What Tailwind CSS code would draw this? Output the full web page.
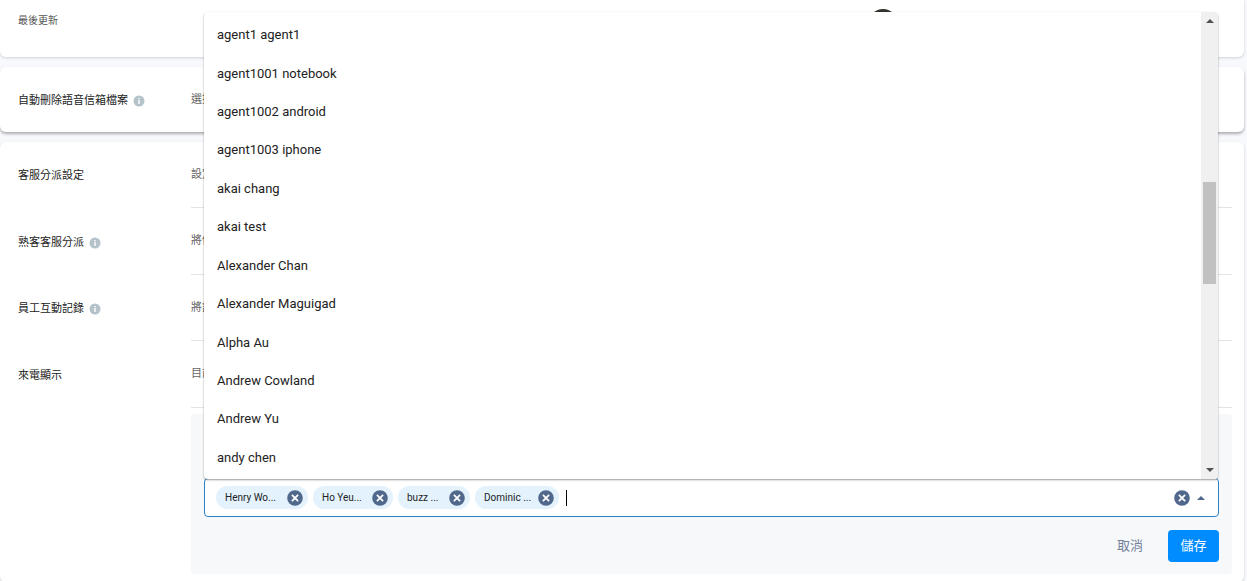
<!DOCTYPE html>
<html lang="zh-Hant">
<head>
    <meta charset="UTF-8">
    <meta name="viewport" content="width=device-width, initial-scale=1.0">
    <title>客服設定</title>
    <script src="https://cdn.jsdelivr.net/npm/@tailwindcss/browser@4"></script>
    <style>
        body {
            font-family: Roboto, 'Noto Sans CJK TC', sans-serif;
        }
    </style>
</head>
<body class="bg-[#f8f9fd] text-[11px] leading-4 text-[#222] overflow-hidden">
    <svg class="hidden">
        <symbol id="info" viewBox="0 0 12 12">
            <circle cx="6" cy="6" r="5.5" fill="#b4c3c9"/>
            <path d="M5.3 2.9h1.4v1.3H5.3zM5.3 5.1h1.4v4H5.3z" fill="#fff"/>
        </symbol>
        <symbol id="close" viewBox="0 0 16 16">
            <circle cx="8" cy="8" r="7.8" fill="#50688b"/>
            <path d="M4.9 4.9l6.2 6.2M11.1 4.9l-6.2 6.2" stroke="#fff" stroke-width="1.8"/>
        </symbol>
    </svg>

    <main class="flex flex-col gap-[10px] pr-[3px]">
        <!-- Last updated -->
        <section class="flex items-start h-[57px] pl-[18px] pt-[9px] bg-white rounded-b-md shadow-[0_1px_3px_rgba(0,0,0,0.16)]">
            <h2 class="w-[173px] pt-1 text-[10px] text-[#555]">最後更新</h2>
            <div class="size-7 ml-[678px] rounded-full bg-[#33332b]"></div>
        </section>

        <!-- Voicemail clean-up -->
        <section class="flex items-center h-[65px] pl-[18px] bg-white rounded-md shadow-[0_2px_3px_rgba(0,0,0,0.3)]">
            <h2 class="flex items-center gap-[5px] w-[173px] pt-[2px]">自動刪除語音信箱檔案 <svg class="size-3"><use href="#info"/></svg></h2>
            <p class="text-[#666]">選擇</p>
        </section>

        <!-- Agent settings -->
        <section class="pl-[18px] pr-3 pb-2 bg-white rounded-md shadow-[0_1px_3px_rgba(0,0,0,0.16)]">
            <div class="flex items-center h-[66px]">
                <h2 class="w-[173px] pt-[2px]">客服分派設定</h2>
                <p class="flex flex-1 items-center h-full border-b border-[#e4e4e4] text-[#666]">設定</p>
            </div>
            <div class="flex items-center h-[67px]">
                <h2 class="flex items-center gap-[5px] w-[173px] pt-[2px]">熟客客服分派 <svg class="size-3"><use href="#info"/></svg></h2>
                <p class="flex flex-1 items-center h-full border-b border-[#e4e4e4] text-[#666]">將你</p>
            </div>
            <div class="flex items-center h-[66px]">
                <h2 class="flex items-center gap-[5px] w-[173px] pt-[2px]">員工互動記錄 <svg class="size-3"><use href="#info"/></svg></h2>
                <p class="flex flex-1 items-center h-full border-b border-[#e4e4e4] text-[#666]">將記</p>
            </div>
            <div class="flex items-center h-[67px]">
                <h2 class="w-[173px] pt-[2px]">來電顯示</h2>
                <p class="flex flex-1 items-center h-full border-b border-[#e4e4e4] text-[#666]">目前</p>
            </div>

            <form class="ml-[173px] mt-[6px] px-[13px] pt-[64px] pb-3 bg-[#f6f8fa] rounded">
                <div class="relative flex items-center gap-[5px] h-[39px] px-[11px] bg-white border border-[#2a82c4] rounded">
                    <!-- Selected agents -->
                    <span class="flex items-center justify-between w-[92px] h-[23px] pl-[9px] pr-[5px] rounded-full bg-[#e3f2fd] text-[10px]">Henry Wo...
                        <button type="button" aria-label="Remove Henry Wo"><svg class="size-4"><use href="#close"/></svg></button>
                    </span>
                    <span class="flex items-center justify-between w-[80px] h-[23px] pl-[9px] pr-[5px] rounded-full bg-[#e3f2fd] text-[10px]">Ho Yeu...
                        <button type="button" aria-label="Remove Ho Yeu"><svg class="size-4"><use href="#close"/></svg></button>
                    </span>
                    <span class="flex items-center justify-between w-[72px] h-[23px] pl-[9px] pr-[5px] rounded-full bg-[#e3f2fd] text-[10px]">buzz ...
                        <button type="button" aria-label="Remove buzz"><svg class="size-4"><use href="#close"/></svg></button>
                    </span>
                    <span class="flex items-center justify-between w-[84px] h-[23px] pl-[9px] pr-[5px] rounded-full bg-[#e3f2fd] text-[10px]">Dominic ...
                        <button type="button" aria-label="Remove Dominic"><svg class="size-4"><use href="#close"/></svg></button>
                    </span>
                    <span class="w-px h-4 ml-[2px] bg-black"></span>
                    <input type="text" aria-label="Agents" class="flex-1 min-w-0 outline-none">
                    <button type="button" aria-label="Clear"><svg class="size-4"><use href="#close"/></svg></button>
                    <button type="button" aria-label="Toggle list" class="mx-[2px]"><svg class="w-2 h-1" viewBox="0 0 8 4"><path d="M0 4l4-4 4 4z" fill="#50688b"/></svg></button>

                    <!-- Options -->
                    <div class="absolute -left-px right-0 bottom-full flex h-[467px] bg-white rounded overflow-hidden shadow-[0_1px_2px_rgba(0,0,0,0.4)]">
                        <ul class="flex flex-col flex-1 pt-1 pb-[2px] pl-[13px] text-[13px]">
                            <li class="flex flex-1 items-center">agent1 agent1</li>
                            <li class="flex flex-1 items-center">agent1001 notebook</li>
                            <li class="flex flex-1 items-center">agent1002 android</li>
                            <li class="flex flex-1 items-center">agent1003 iphone</li>
                            <li class="flex flex-1 items-center">akai chang</li>
                            <li class="flex flex-1 items-center">akai test</li>
                            <li class="flex flex-1 items-center">Alexander Chan</li>
                            <li class="flex flex-1 items-center">Alexander Maguigad</li>
                            <li class="flex flex-1 items-center">Alpha Au</li>
                            <li class="flex flex-1 items-center">Andrew Cowland</li>
                            <li class="flex flex-1 items-center">Andrew Yu</li>
                            <li class="flex flex-1 items-center">andy chen</li>
                        </ul>
                        <!-- Scrollbar -->
                        <div class="flex flex-col items-center justify-between w-[17px] py-[7px] bg-[#f0f0f0]">
                            <svg class="w-2 h-1" viewBox="0 0 8 4"><path d="M0 4l4-4 4 4z" fill="#505050"/></svg>
                            <div class="w-[13px] h-[102px] mb-[26px] bg-[#c1c1c1]"></div>
                            <svg class="w-2 h-1" viewBox="0 0 8 4"><path d="M0 0l4 4 4-4z" fill="#505050"/></svg>
                        </div>
                    </div>
                </div>

                <div class="flex justify-end gap-[13px] mt-[13px] text-[13px]">
                    <button type="button" class="h-8 px-3 text-[#74829a]">取消</button>
                    <button type="submit" class="w-[51px] h-8 rounded bg-[#008cff] text-white">儲存</button>
                </div>
            </form>
        </section>
    </main>
</body>
</html>
